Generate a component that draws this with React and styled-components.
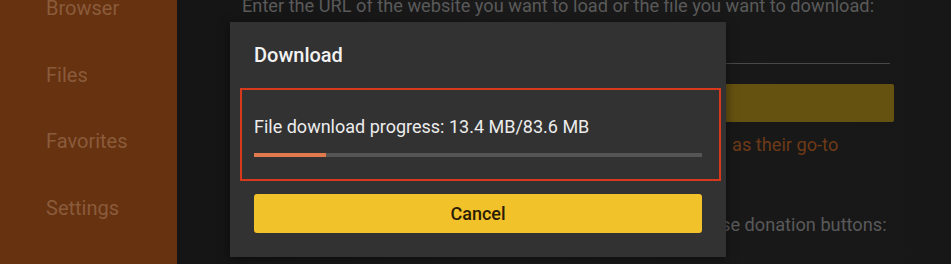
import styled, { createGlobalStyle } from "styled-components";

const GlobalStyle = createGlobalStyle`
  html, body {
    margin: 0;
    padding: 0;
    background: #181818;
  }
  body {
    font-family: Roboto, "Noto Sans", sans-serif;
  }
`;

const App = () => {
  return (
    <Screen>
      <GlobalStyle />
      <Sidebar>
        <NavItem>Browser</NavItem>
        <NavItem>Files</NavItem>
        <NavItem>Favorites</NavItem>
        <NavItem>Settings</NavItem>
      </Sidebar>

      <Main>
        <Line>Enter the URL of the website you want to load or the file you want to download:</Line>
        <Rule />
        <GoBar />
        <Line $tone="accent" $top={12} $indent={490}>
          as their go-to
        </Line>
        <Line $top={58} $indent={479}>
          se donation buttons:
        </Line>

        <Dialog>
          <Title>Download</Title>
          <Progress>File download progress: 13.4 MB/83.6 MB</Progress>
          <Track>
            <Fill style={{ width: `${(13.4 / 83.6) * 100}%` }} />
          </Track>
          <CancelBtn>Cancel</CancelBtn>
          <Highlight />
        </Dialog>
      </Main>
    </Screen>
  );
};

export default App;

const Screen = styled.div`
  display: flex;
  width: 951px;
  height: 264px;
  overflow: hidden;
  background: #181818;
`;

const Sidebar = styled.div`
  width: 177px;
  flex-shrink: 0;
  background: #673210;
  padding-left: 46px;
  box-sizing: border-box;
  display: flex;
  flex-direction: column;
`;

const NavItem = styled.div`
  font-size: 20px;
  line-height: 66.5px;
  color: #8a5b3b;
  &:first-child {
    margin-top: -25px;
  }
`;

const Main = styled.div`
  position: relative;
  flex: 1;
  padding-left: 65px;
  display: flex;
  flex-direction: column;
  background: linear-gradient(90deg, #141414, #1a1a1a 40%, #171717);
`;

const Line = styled.div`
  font-size: 18.2px;
  line-height: 22px;
  white-space: nowrap;
  color: ${(p) => (p.$tone === "accent" ? "#6e3a17" : "#5a5a5a")};
  margin-top: ${(p) => (p.$top !== undefined ? p.$top : -5)}px;
  padding-left: ${(p) => p.$indent || 0}px;
`;

const Rule = styled.div`
  width: 648px;
  height: 1px;
  background: #484848;
  margin-top: 46px;
`;

const GoBar = styled.div`
  width: 652px;
  height: 38px;
  margin-top: 20px;
  background: #665210;
  border-radius: 2px;
`;

const Dialog = styled.div`
  position: absolute;
  left: 53px;
  top: 22px;
  width: 496px;
  height: 235px;
  box-sizing: border-box;
  padding: 21px 24px 24px;
  background: #323232;
  display: flex;
  flex-direction: column;
  box-shadow: 0 2px 10px rgba(0, 0, 0, 0.5);
`;

const Title = styled.div`
  font-size: 20px;
  line-height: 24px;
  font-weight: 500;
  color: #f2f2f2;
`;

const Progress = styled.div`
  margin-top: 50px;
  font-size: 18px;
  line-height: 20px;
  color: #ececec;
`;

const Track = styled.div`
  margin-top: 16px;
  height: 4px;
  background: #555555;
`;

const Fill = styled.div`
  height: 100%;
  background: #e0794d;
`;

const CancelBtn = styled.button`
  margin-top: 37px;
  height: 39px;
  border: none;
  border-radius: 3px;
  background: #f2c22a;
  color: #2a1c06;
  font-family: Roboto, "Noto Sans", sans-serif;
  font-size: 18px;
  font-weight: 500;
  padding: 0;
`;

const Highlight = styled.div`
  position: absolute;
  left: 10px;
  top: 66px;
  width: 481px;
  height: 93px;
  box-sizing: border-box;
  border: 2px solid #d8391d;
  pointer-events: none;
`;
